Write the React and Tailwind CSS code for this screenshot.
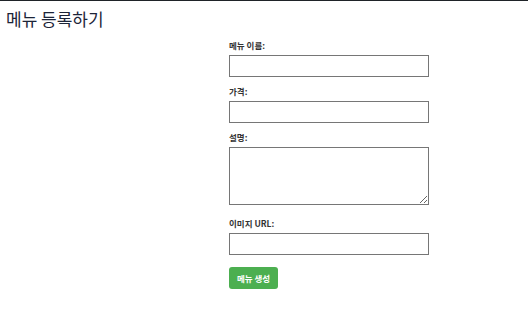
export default function App() {
  const font = { fontFamily: '"Noto Sans CJK KR", "Noto Sans", sans-serif' }
  const label = 'block text-[8.5px] leading-[10px] font-bold text-[#333] mb-[5px]'
  const field = 'block w-[200px] h-[22px] border border-[#767676] bg-white'

  return (
    <div className="min-h-[325px] w-[528px] bg-white border-t border-[#1f2328]" style={font}>
      <h1 className="pl-[6px] pt-[8px] text-[17px] leading-[20px] text-[#1c2438]">메뉴 등록하기</h1>
      <form className="pl-[229px] pt-[11px]">
        <div className="mb-[9px]">
          <label className={label}>메뉴 이름:</label>
          <input type="text" className={field} />
        </div>
        <div className="mb-[9px]">
          <label className={label}>가격:</label>
          <input type="text" className={field} />
        </div>
        <div className="mb-[13px]">
          <label className={label}>설명:</label>
          <textarea className="block w-[200px] h-[58px] border border-[#767676] bg-white" />
        </div>
        <div className="mb-[8px]">
          <label className={label}>이미지 URL:</label>
          <input type="text" className={field} />
        </div>
        <button
          type="button"
          className="w-[49px] h-[22px] bg-[#4caf50] rounded-[3px] text-white text-[8.5px] font-bold"
        >
          메뉴 생성
        </button>
      </form>
    </div>
  )
}
